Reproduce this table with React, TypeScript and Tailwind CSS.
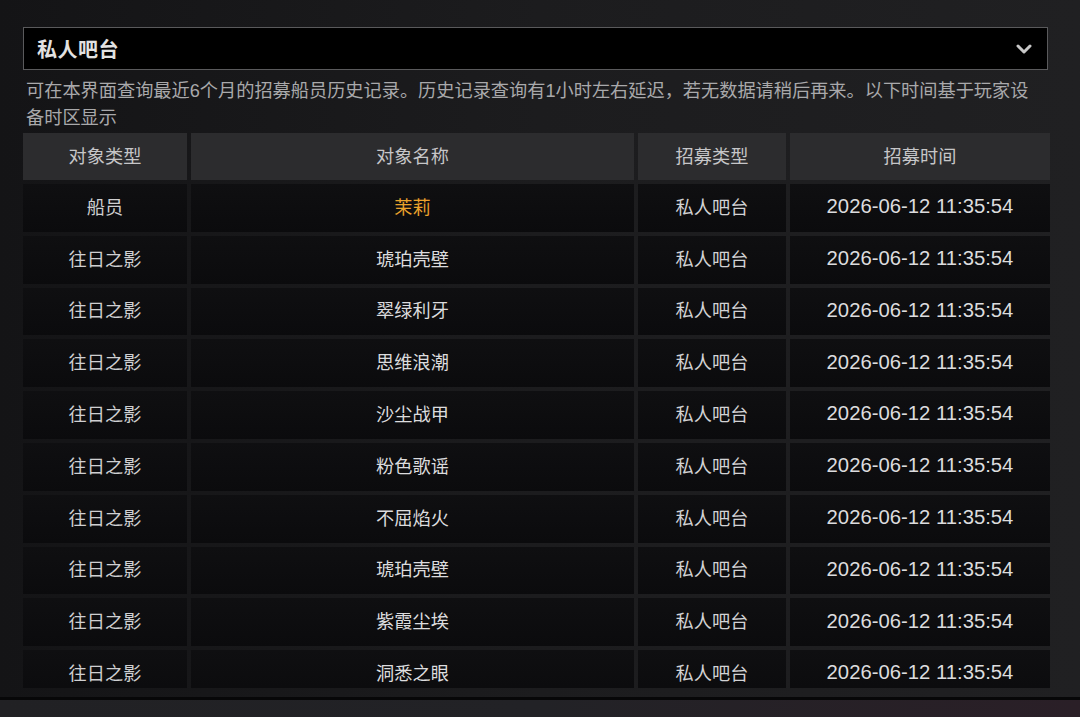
import { ChevronDown } from "lucide-react";

const rows = [
  { type: "船员", name: "茉莉", highlight: true },
  { type: "往日之影", name: "琥珀壳壁" },
  { type: "往日之影", name: "翠绿利牙" },
  { type: "往日之影", name: "思维浪潮" },
  { type: "往日之影", name: "沙尘战甲" },
  { type: "往日之影", name: "粉色歌谣" },
  { type: "往日之影", name: "不屈焰火" },
  { type: "往日之影", name: "琥珀壳壁" },
  { type: "往日之影", name: "紫霞尘埃" },
  { type: "往日之影", name: "洞悉之眼" },
];

const headers = ["对象类型", "对象名称", "招募类型", "招募时间"];

const cjk = "font-['Noto_Sans_CJK_SC',sans-serif]";
const latin = "font-['Liberation_Sans','Noto_Sans_CJK_SC',sans-serif]";

export default function App() {
  return (
    <div className={`w-[1080px] h-[717px] overflow-hidden flex flex-col bg-gradient-to-r from-[#141416] via-[#1c1c1e] to-[#202022] ${cjk}`}>
      <div className="flex flex-col pl-[23px] pr-[30px] pt-[27px]">
        {/* dropdown */}
        <div className="w-[1025px] h-[43px] border border-[#5a5a5c] bg-black flex items-center justify-between pl-[13px] pr-[11px]">
          <span className="text-[20px] font-bold text-[#e2e2e2] tracking-[0.5px]">私人吧台</span>
          <ChevronDown size={24} strokeWidth={3} className="text-[#c8c8c8]" />
        </div>

        <p className="mt-[7px] pl-[3px] text-[18.2px] leading-[25px] text-[#a9a9ab]">
          <span className="block whitespace-nowrap">
            可在本界面查询最近<span className={latin}>6</span>个月的招募船员历史记录。历史记录查询有<span className={latin}>1</span>小时左右延迟，若无数据请稍后再来。以下时间基于玩家设
          </span>
          <span className="block whitespace-nowrap">备时区显示</span>
        </p>

        {/* table */}
        <div className="mt-[4px] h-[555px] overflow-hidden">
          <div className="grid grid-cols-[164px_443px_148px_260px] gap-x-[4px] gap-y-[4px] w-[1027px]">
            {headers.map((h) => (
              <div key={h} className="h-[47px] pb-[2px] bg-[#2c2c2e] flex items-center justify-center text-[18.2px] text-[#c6c6c8]">
                {h}
              </div>
            ))}
            {rows.map((r, i) => (
              <Row key={i} {...r} />
            ))}
          </div>
        </div>
      </div>

      {/* bottom strip */}
      <div className="mt-[9px] h-[3px] bg-[#070708]" />
      <div className="flex-1 bg-gradient-to-r from-[#212124] via-[#222226] to-[#2a1f27]" />
    </div>
  );
}

function Row({ type, name, highlight }: { type: string; name: string; highlight?: boolean }) {
  const cell = "h-[47.8px] pb-[3px] bg-gradient-to-b from-[#0f0f11] to-[#0b0b0d] flex items-center justify-center";
  return (
    <>
      <div className={`${cell} text-[18.2px] text-[#cfcfd1]`}>{type}</div>
      <div className={`${cell} text-[18.2px] ${highlight ? "text-[#eba22c]" : "text-[#dcdcde]"}`}>{name}</div>
      <div className={`${cell} text-[18.2px] text-[#d2d2d4]`}>私人吧台</div>
      <div className={`${cell} ${latin} text-[20.3px] text-[#dcdcde]`}>2026-06-12 11:35:54</div>
    </>
  );
}
